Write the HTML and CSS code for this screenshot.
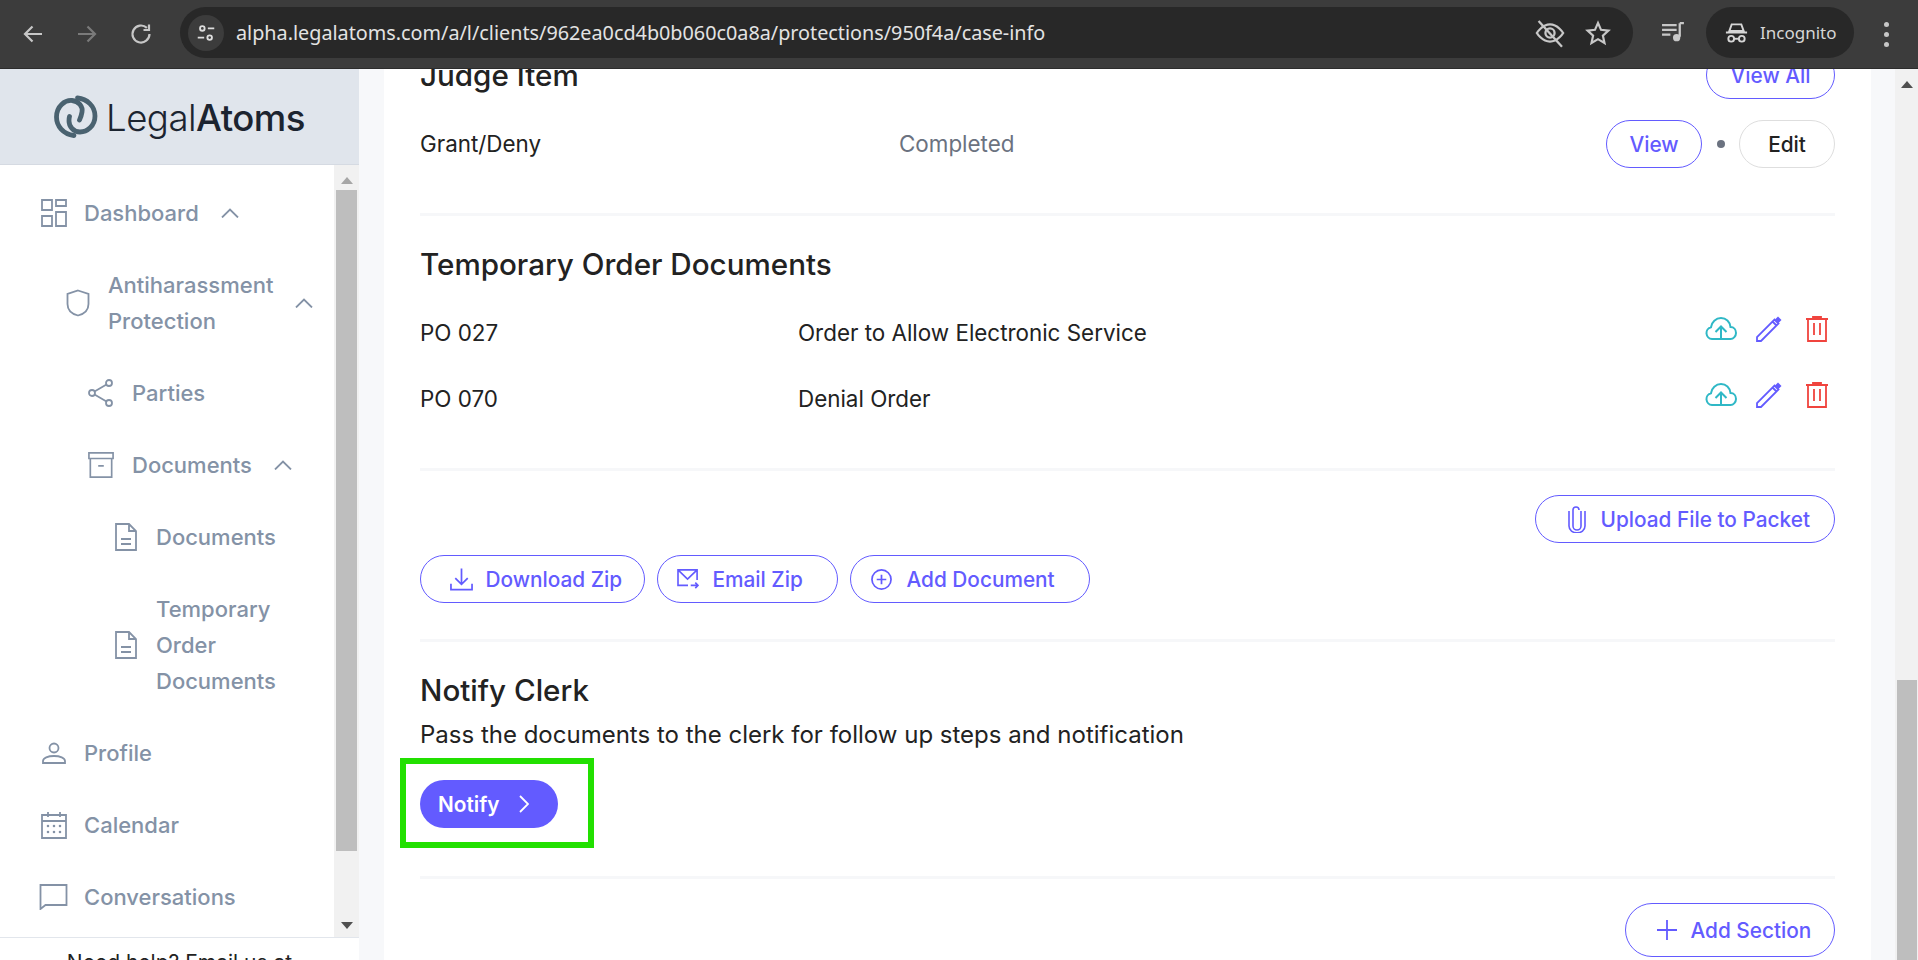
FILE: index.html
```html
<!DOCTYPE html>
<html lang="en">
<head>
<meta charset="utf-8">
<title>LegalAtoms</title>
<link rel="stylesheet" href="styles.css">
</head>
<body>
<header class="toolbar">
  <svg class="tb-icon first" viewBox="0 0 24 24"><path d="M21 12H4M11.500 4.500 4 12l7.500 7.500"/></svg>
  <svg class="tb-icon dim" viewBox="0 0 24 24"><path d="M3 12h17M12.500 4.500 20 12l-7.500 7.500"/></svg>
  <svg class="tb-icon" viewBox="0 0 24 24"><path d="M20.500 12a8.500 8.500 0 1 1-2.600-6.100M20 2.500v5.500h-5.500"/></svg>
  <div class="omnibox">
    <span class="tune"><svg viewBox="0 0 24 24"><circle cx="8" cy="7" r="2.500"/><path d="M14 7h7M3 17h7"/><circle cx="16" cy="17" r="2.500"/></svg></span>
    <span class="url">alpha.legalatoms.com/a/l/clients/962ea0cd4b0b060c0a8a/protections/950f4a/case-info</span>
    <svg class="omni-icon eye" viewBox="0 0 28 28"><path d="M2.500 14S7 6.500 14 6.500 25.500 14 25.500 14 21 21.500 14 21.500 2.500 14 2.500 14Z"/><circle cx="14" cy="14" r="4"/><path d="M4 3.500 24.500 26"/></svg>
    <svg class="omni-icon star" viewBox="0 0 24 24"><path d="m12 2.800 2.800 6.300 6.800.7-5.100 4.600 1.500 6.800-6-3.500-6 3.500 1.500-6.800-5.100-4.600 6.800-.7Z"/></svg>
  </div>
  <svg class="media" viewBox="0 0 24 24"><path d="M1 5h14M1 9.500h14M1 14h8"/><path d="M18 3h4M18 3v13"/><circle class="fill" cx="15" cy="17" r="3.500"/></svg>
  <div class="incognito">
    <svg viewBox="0 0 26 24"><path d="M8 3h10l2.500 7h-15ZM2 11.500h22"/><circle cx="7.500" cy="18" r="3"/><circle cx="18.500" cy="18" r="3"/><path d="M10.500 18h5"/></svg>
    <span>Incognito</span>
  </div>
  <div class="kebab"><i></i><i></i><i></i></div>
</header>

<div class="shell">
  <aside class="sidebar">
    <div class="brand">
      <svg class="logo" viewBox="0 0 46 44"><path d="M21 40.500C10 39 3.500 31 3.500 22 3.500 11 12 5 19 5.500 26 6 30 12 29 17 28.500 20 27.500 23 26.500 25"/><path d="M24.500 3C34 4 42 11 42 21 42 31 34 37 27 37 20 37 16 31 16 26 16 24.500 16 23 16.500 21.500"/></svg>
      <span class="wordmark">Legal<b>Atoms</b></span>
    </div>
    <div class="side-body">
      <nav class="nav">
        <a class="item lv0"><svg class="ni" viewBox="0 0 26 28"><path d="M1 1h10v10H1ZM15 1h10v6H15ZM1 17h10v10H1ZM15 13h10v14H15Z"/></svg><span>Dashboard</span><svg class="chev" viewBox="0 0 18 10"><path d="M1 9.500 9 1.500l8 8"/></svg></a>
        <a class="item lv1"><svg class="ni shield" viewBox="0 0 24 28"><path d="M12 1.500 22.500 5v10c0 6-4.500 10-10.500 11.500C6 25 1.500 21 1.500 15V5Z"/></svg><span class="wrap">Antiharassment Protection</span><svg class="chev up" viewBox="0 0 18 10"><path d="M1 9.500 9 1.500l8 8"/></svg></a>
        <a class="item lv2"><svg class="ni" viewBox="0 0 26 28"><circle cx="21" cy="4" r="3"/><circle cx="4" cy="14" r="3"/><circle cx="21" cy="24" r="3"/><path d="m18.500 5.500-12 7M6.500 15.500l12 7"/></svg><span>Parties</span></a>
        <a class="item lv2"><svg class="ni" viewBox="0 0 28 28"><path d="M1 1h26v6H1ZM2.500 7v20h23V7M11 15h6"/></svg><span>Documents</span><svg class="chev sm" viewBox="0 0 18 10"><path d="M1 9.500 9 1.500l8 8"/></svg></a>
        <a class="item lv3"><svg class="ni doc" viewBox="0 0 22 28"><path d="M1 1h13l7 7v19H1ZM14 1v7h7"/><path d="M6 16h10M6 21h10"/></svg><span>Documents</span></a>
        <a class="item lv3"><svg class="ni doc" viewBox="0 0 22 28"><path d="M1 1h13l7 7v19H1ZM14 1v7h7"/><path d="M6 16h10M6 21h10"/></svg><span class="wrap narrow">Temporary Order Documents</span></a>
        <a class="item lv0"><svg class="ni profile" viewBox="0 0 24 22"><circle cx="12" cy="6" r="4.500"/><path d="M1 21v-2c0-3 5-5 11-5s11 2 11 5v2Z"/></svg><span>Profile</span></a>
        <a class="item lv0"><svg class="ni" viewBox="0 0 26 28"><path d="M1 4h24v23H1ZM1 10h24M7 1v5M19 1v5"/><path class="dots" d="M7 15h.01M13 15h.01M19 15h.01M7 21h.01M13 21h.01M19 21h.01"/></svg><span>Calendar</span></a>
        <a class="item lv0 convo"><svg class="ni" viewBox="0 0 28 26"><path d="M1 1h26v20H6l-5 4Z"/></svg><span>Conversations</span></a>
      </nav>
      <div class="side-scroll">
        <span class="arrow-up"></span>
        <div class="side-thumb"></div>
        <span class="arrow-down"></span>
      </div>
    </div>
    <div class="help">Need help? Email us at</div>
  </aside>

  <main class="card">
    <section class="sec judge">
      <div class="head-row">
        <h2>Judge Item</h2>
        <a class="btn view-all">View All</a>
      </div>
      <div class="judge-row">
        <span class="jr-name">Grant/Deny</span>
        <span class="jr-status">Completed</span>
        <a class="btn small">View</a>
        <i class="dot"></i>
        <a class="btn small plain">Edit</a>
      </div>
    </section>

    <section class="sec docs">
      <h2>Temporary Order Documents</h2>
      <div class="doc-row">
        <span class="code">PO 027</span><span class="dname">Order to Allow Electronic Service</span>
        <svg class="act cloud" viewBox="0 0 32 24"><path d="M9 22H7a6 6 0 0 1-1-11.800C6.500 5 11 1 16 1c5 0 9 3.500 9.500 9 3.500 0 5.500 3 5.500 6s-2.500 6-5.500 6H9"/><path d="M16 22V10M10.500 15 16 9.500l5.500 5.500"/></svg>
        <svg class="act pencil" viewBox="0 0 26 26"><path d="M1 25v-4L18.500 3.500l4 4L5 25ZM16.500 5.500l4 4"/><path class="solid" d="M22 .500l3.500 3.500-3 3-3.500-3.500Z"/></svg>
        <svg class="act trash" viewBox="0 0 22 26"><path d="M0 3h22M7 3V1h8v2M2 3v22h18V3M8 7v12M14 7v12"/></svg>
      </div>
      <div class="doc-row">
        <span class="code">PO 070</span><span class="dname">Denial Order</span>
        <svg class="act cloud" viewBox="0 0 32 24"><path d="M9 22H7a6 6 0 0 1-1-11.800C6.500 5 11 1 16 1c5 0 9 3.500 9.500 9 3.500 0 5.500 3 5.500 6s-2.500 6-5.500 6H9"/><path d="M16 22V10M10.500 15 16 9.500l5.500 5.500"/></svg>
        <svg class="act pencil" viewBox="0 0 26 26"><path d="M1 25v-4L18.500 3.500l4 4L5 25ZM16.500 5.500l4 4"/><path class="solid" d="M22 .500l3.500 3.500-3 3-3.500-3.500Z"/></svg>
        <svg class="act trash" viewBox="0 0 22 26"><path d="M0 3h22M7 3V1h8v2M2 3v22h18V3M8 7v12M14 7v12"/></svg>
      </div>
    </section>

    <section class="sec actions">
      <div class="right"><a class="btn upload"><svg class="bi clip" viewBox="0 0 18 28"><path d="M13 6v15a4 4 0 0 1-8 0V5a3 3 0 0 1 6 0v0M1 6v15c0 9 16 9 16 0V6"/></svg>Upload File to Packet</a></div>
      <div class="btn-row">
        <a class="btn dl"><svg class="bi" viewBox="0 0 24 24"><path d="M12 1v16M5.500 11l6.500 6.500 6.500-6.500M1 17v6h22v-6"/></svg>Download Zip</a>
        <a class="btn em"><svg class="bi" viewBox="0 0 24 22"><path d="M12 18H1V1h21v11M1 1l10.500 10L22 1M15 18h8M20 15l3 3-3 3"/></svg>Email Zip</a>
        <a class="btn ad"><svg class="bi" viewBox="0 0 22 22"><circle cx="11" cy="11" r="10"/><path d="M11 6v10M6 11h10"/></svg>Add Document</a>
      </div>
    </section>

    <section class="sec notify">
      <h2>Notify Clerk</h2>
      <p>Pass the documents to the clerk for follow up steps and notification</p>
      <a class="btn solid-btn">Notify<svg viewBox="0 0 10 18"><path d="m1 1 8 8-8 8"/></svg></a>
      <div class="highlight"></div>
    </section>

    <section class="add">
      <a class="btn addsec"><svg class="bi" viewBox="0 0 20 20"><path d="M10 0v20M0 10h20"/></svg>Add Section</a>
    </section>
  </main>

  <div class="page-scroll">
    <span class="arrow-up dark"></span>
    <div class="page-thumb"></div>
  </div>
</div>
</body>
</html>
```
FILE: styles.css
```css
* { box-sizing: border-box; }
html, body { margin: 0; height: 100%; overflow: hidden; }
body { font-family: Inter, "Noto Sans", sans-serif; color: #222; background: #f7f8fa; display: flex; flex-direction: column; }
svg { fill: none; stroke: currentColor; flex: none; display: block; }
a { text-decoration: none; }

.toolbar { height: 69px; flex: none; background: #3c3c3c; border-bottom: 1px solid #2c2c2c; display: flex; align-items: center; color: #c7c7c7; position: relative; z-index: 3; }
.tb-icon { width: 24px; height: 24px; stroke-width: 2.200; margin-right: 30px; }
.tb-icon.first { margin-left: 21px; }
.tb-icon.dim { color: #7a7a7a; }
.omnibox { position: absolute; left: 180px; width: 1453px; top: 7px; height: 51px; background: #282828; border-radius: 26px; display: flex; align-items: center; }
.tune { width: 36px; height: 36px; margin-left: 8px; border-radius: 50%; background: #3c3c3c; display: flex; align-items: center; justify-content: center; }
.tune svg { width: 22px; height: 22px; stroke: #ddd; stroke-width: 2; }
.url { margin-left: 12px; font: 400 19.800px "Noto Sans", sans-serif; color: #e3e3e3; white-space: nowrap; flex: 1; }
.omni-icon { stroke-width: 2; color: #c7c7c7; }
.eye { width: 32px; height: 32px; margin-right: 19px; }
.star { width: 26px; height: 26px; margin-right: 22px; }
.media { position: absolute; left: 1661px; top: 20px; width: 25px; height: 25px; stroke-width: 2.200; color: #c7c7c7; }
.media .fill { fill: currentColor; stroke: none; }
.incognito { position: absolute; left: 1706px; top: 7px; width: 148px; height: 51px; background: #282828; border-radius: 26px; display: flex; align-items: center; color: #d6d6d6; font: 400 17px "Noto Sans", sans-serif; }
.incognito svg { width: 25px; height: 24px; stroke-width: 2; margin: 0 11px 0 18px; }
.kebab { position: absolute; left: 1884px; top: 22px; display: flex; flex-direction: column; gap: 5px; }
.kebab i { width: 5px; height: 5px; border-radius: 50%; background: #c7c7c7; }

.shell { flex: 1; min-height: 0; display: flex; }
.sidebar { width: 359px; flex: none; background: #fff; display: flex; flex-direction: column; overflow: hidden; }
.brand { height: 96px; flex: none; background: #e0e5ec; border-bottom: 1px solid #d5dae2; display: flex; align-items: center; padding-left: 53px; gap: 7px; }
.logo { width: 46px; height: 44px; color: #4a6270; stroke-width: 4.800; stroke-linecap: round; }
.wordmark { font-size: 36.600px; font-weight: 300; color: #1c2430; letter-spacing: -.5px; padding-top: 2px; }
.wordmark b { font-weight: 500; }
.side-body { flex: 1; min-height: 0; display: flex; border-bottom: 1px solid #e2e6ec; }
.nav { flex: 1; padding-top: 12px; overflow: hidden; }
.item { display: flex; align-items: center; padding: 18px 0; color: #8492a6; font-size: 22px; font-weight: 500; line-height: 36px; }
.lv0 { padding-left: 41px; }
.lv1 { padding-left: 66px; }
.lv2 { padding-left: 88px; }
.lv3 { padding-left: 115px; }
.ni { width: 26px; height: 28px; stroke-width: 1.800; margin-right: 17px; }
.dots { stroke-linecap: round; stroke-width: 2.600; }
.lv1 .ni { width: 24px; margin-right: 18px; }
.lv2 .ni { margin-right: 18px; }
.doc { width: 22px; margin-right: 19px; }
.profile { width: 24px; height: 22px; margin: 0 18px 0 1px; }
.convo { padding-left: 39px; }
.convo .ni { width: 29px; height: 26px; margin-right: 16px; }
.wrap { width: 170px; }
.narrow { width: 130px; }
.chev { width: 18px; height: 10px; stroke-width: 1.800; margin-left: 22px; }
.chev.up { margin-left: 17px; }
.chev.sm { margin-left: 22px; }
.side-scroll { width: 25px; flex: none; background: #f1f1f1; display: flex; flex-direction: column; align-items: center; padding: 0 2px; }
.side-thumb { width: 21px; height: 661px; background: #bebebe; margin-top: 6px; }
.arrow-up { width: 0; height: 0; border: 6px solid transparent; border-top: 0; border-bottom: 7px solid #a6a6a6; margin-top: 12px; flex: none; }
.arrow-up.dark { border-bottom-color: #505050; }
.arrow-down { width: 0; height: 0; border: 6px solid transparent; border-bottom: 0; border-top: 7px solid #505050; margin-top: 71px; flex: none; }
.help { flex: none; height: 22px; text-align: center; font-size: 21px; line-height: 22px; color: #222; padding-top: 14px; white-space: nowrap; overflow: visible; }

.card { margin-left: 25px; width: 1487px; flex: none; background: #fff; padding: 0 36px; overflow: hidden; }
.sec { border-bottom: 3px solid #f6f7f9; }
h2 { margin: 0; font-size: 29.600px; line-height: 38px; font-weight: 500; color: #222; }
.btn { display: inline-flex; align-items: center; justify-content: center; height: 48px; border: 1.500px solid #635bff; border-radius: 24px; color: #635bff; font-size: 20.800px; font-weight: 500; white-space: nowrap; }
.bi { stroke-width: 1.800; }
.judge { margin-top: -18px; padding-bottom: 45px; }
.head-row { display: flex; justify-content: space-between; align-items: center; height: 48px; }
.view-all { width: 129px; }
.judge-row { display: flex; align-items: center; margin-top: 21px; font-size: 22.400px; }
.jr-name { width: 479px; padding-bottom: 2px; }
.jr-status { flex: 1; color: #6b7280; padding-bottom: 2px; }
.small { width: 96px; }
.plain { border-color: #dedede; color: #222; }
.dot { width: 8px; height: 8px; border-radius: 50%; background: #6b7280; margin: 0 14.500px; }

.docs { padding: 29px 0 36px; }
.docs h2 { margin-bottom: 17px; }
.doc-row { height: 66px; display: flex; align-items: center; font-size: 22.400px; }
.code { width: 378px; padding-bottom: 2px; }
.dname { flex: 1; padding-bottom: 2px; }
.act { stroke-width: 1.800; }
.cloud { width: 32px; height: 24px; color: #2fb8c6; margin: -9px 19px 0 0; stroke-width: 2; }
.pencil { width: 26px; height: 26px; color: #635bff; margin: -9px 24px 0 0; }
.pencil .solid { fill: #635bff; stroke: none; }
.trash { width: 22px; height: 26px; color: #f0443e; margin: -9px 7px 0 0; }

.actions { padding: 24px 0 36px; }
.right { display: flex; justify-content: flex-end; }
.upload { width: 300px; justify-content: flex-start; padding-left: 31.500px; }
.clip { width: 18px; height: 28px; margin-right: 15px; stroke-width: 1.600; }
.btn-row { display: flex; gap: 12px; margin-top: 12px; }
.dl { width: 225px; justify-content: flex-start; padding-left: 28.500px; }
.dl .bi { width: 23px; height: 24px; margin-right: 13px; }
.em { width: 181px; justify-content: flex-start; padding-left: 18.500px; }
.em .bi { width: 22px; height: 20px; margin-right: 14px; }
.ad { width: 240px; justify-content: flex-start; padding-left: 19.500px; }
.ad .bi { width: 21px; height: 21px; margin-right: 15px; }

.notify { position: relative; padding: 29px 0 48px; }
.notify p { margin: 8px 0 27px; font-size: 24px; line-height: 36px; font-weight: 400; }
.solid-btn { display: flex; width: 138px; background: #635bff; color: #fff; font-weight: 600; border: none; gap: 19px; justify-content: flex-start; padding-left: 18px; }
.solid-btn svg { width: 10px; height: 18px; stroke-width: 1.800; }
.highlight { position: absolute; left: -20px; top: 116px; width: 194px; height: 90px; border: 6px solid #22e000; }
.add { display: flex; justify-content: flex-end; padding-top: 24px; }
.addsec { width: 210px; height: 54px; border-radius: 27px; justify-content: flex-start; padding-left: 30.500px; }
.addsec .bi { width: 20px; height: 20px; margin-right: 14px; }

.page-scroll { margin-left: 24px; width: 23px; flex: none; background: #f1f1f1; display: flex; flex-direction: column; align-items: center; }
.page-thumb { width: 20px; height: 280px; background: #bebebe; margin-top: 592px; }
```
